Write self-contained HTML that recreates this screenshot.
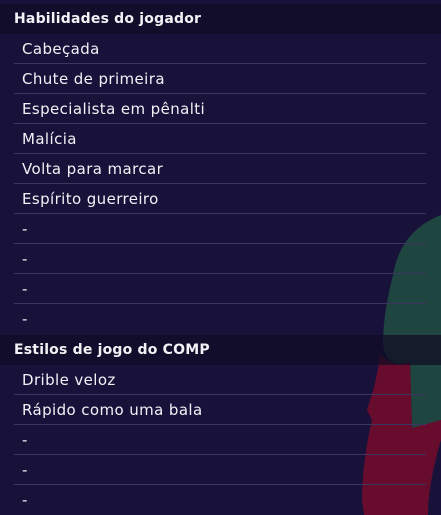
<!DOCTYPE html>
<html><head><style>
body{margin:0;width:441px;height:515px;background:#18113a;overflow:hidden;position:relative;font-family:"DejaVu Sans","Liberation Sans",sans-serif;color:#f2f2f6}
svg.bg{position:absolute;left:0;top:0}
.h{position:absolute;left:0;width:441px;height:30px;background:rgba(16,12,36,0.7);font-weight:bold;font-size:14px;line-height:30px;padding-left:14px;box-sizing:border-box;letter-spacing:0.2px}
.r{position:absolute;left:14px;width:412px;height:30px;border-bottom:1px solid #3b3560;font-size:15px;line-height:30px;padding-left:8px;box-sizing:border-box;letter-spacing:0.4px}
</style></head><body>
<svg class="bg" width="441" height="515">
<path d="M441 215 C415 225 398 245 393 275 C387 300 383 320 383 345 C385 358 392 364 400 364 L410 362 L412 428 L441 430 Z" fill="#1e4540"/>
<path d="M380 355 C378 375 372 395 367 410 L372 420 C366 445 362 475 362 500 L364 515 L428 515 C428 490 435 460 441 440 L441 420 L412 428 L410 362 L400 364 C392 364 385 360 380 355Z" fill="#680c2e"/>
</svg>
<div class="h" style="top:4px">Habilidades do jogador</div>
<div class="r" style="top:34px">Cabeçada</div>
<div class="r" style="top:64px">Chute de primeira</div>
<div class="r" style="top:94px">Especialista em pênalti</div>
<div class="r" style="top:124px">Malícia</div>
<div class="r" style="top:154px">Volta para marcar</div>
<div class="r" style="top:184px">Espírito guerreiro</div>
<div class="r" style="top:214px">-</div>
<div class="r" style="top:244px">-</div>
<div class="r" style="top:274px">-</div>
<div class="r" style="top:304px;border-bottom:none">-</div>
<div class="h" style="top:335px">Estilos de jogo do COMP</div>
<div class="r" style="top:365px">Drible veloz</div>
<div class="r" style="top:395px">Rápido como uma bala</div>
<div class="r" style="top:425px">-</div>
<div class="r" style="top:455px">-</div>
<div class="r" style="top:485px;border-bottom:none">-</div>
</body></html>
